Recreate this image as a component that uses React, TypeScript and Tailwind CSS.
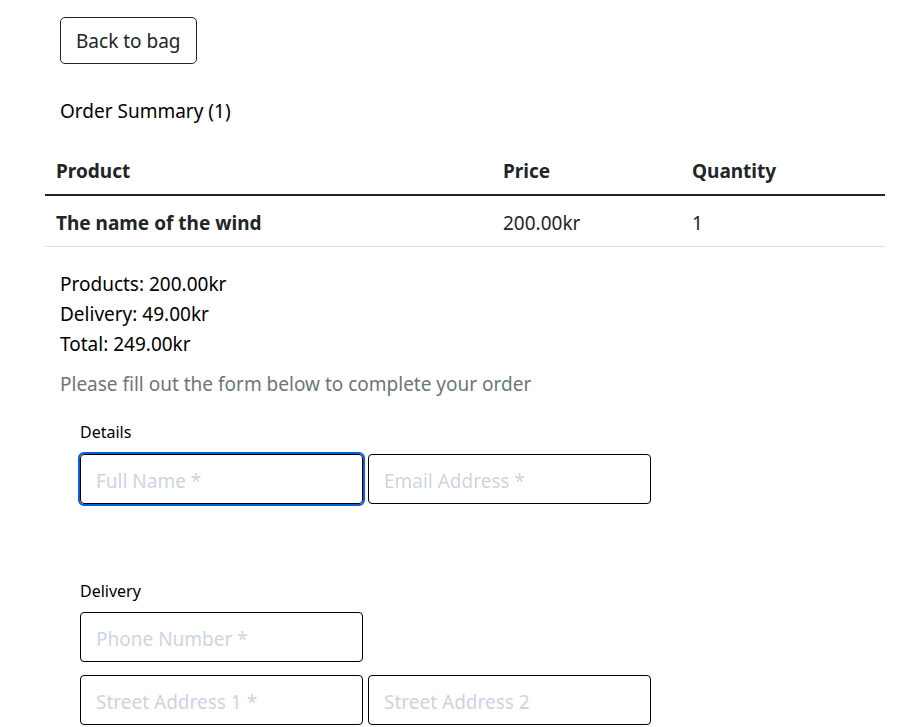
export default function App() {
  return (
    <div className="min-h-screen bg-white text-[#212529] font-['Noto_Sans',sans-serif] text-[19px]">
      <div className="pt-[17px] px-[60px]">
        <button className="h-[47px] px-[15px] pt-[2px] border border-[#212529] rounded-[5px] text-[19px] text-[#212529]">
          Back to bag
        </button>
        <h2 className="mt-[32px] text-[19px] leading-[30px] text-black">Order Summary (1)</h2>
      </div>

      <table className="ml-[45px] mt-[22px] w-[840px] text-left leading-[24px]">
        <thead>
          <tr className="border-b-2 border-[#212529]">
            <th className="pl-[11px] pt-[11px] pb-[11px] font-bold w-[447px]">Product</th>
            <th className="pl-[11px] pt-[11px] pb-[11px] font-bold w-[189px]">Price</th>
            <th className="pl-[11px] pt-[11px] pb-[11px] font-bold">Quantity</th>
          </tr>
        </thead>
        <tbody>
          <tr className="border-b border-[#dee2e6]">
            <td className="pl-[11px] pt-[15px] pb-[11px] font-bold">The name of the wind</td>
            <td className="pl-[11px] pt-[15px] pb-[11px]">200.00kr</td>
            <td className="pl-[11px] pt-[15px] pb-[11px]">1</td>
          </tr>
        </tbody>
      </table>

      <div className="px-[60px] pt-[22px] text-black leading-[30px]">
        <p>Products: 200.00kr</p>
        <p>Delivery: 49.00kr</p>
        <p>Total: 249.00kr</p>
        <p className="mt-[10px] text-[#6c757d]">Please fill out the form below to complete your order</p>
      </div>

      <form className="px-[80px] pt-[21px]">
        <div className="text-[16px] leading-[24px] text-black">Details</div>
        <div className="mt-[10px] flex gap-[5px]">
          <input
            autoFocus
            placeholder="Full Name *"
            className="w-[283px] h-[50px] px-[15px] pt-[3px] border border-black rounded-[4px] outline-2 outline-[#0060df] text-[19px] placeholder:text-[#cbd5e1]"
          />
          <input
            placeholder="Email Address *"
            className="w-[283px] h-[50px] px-[15px] pt-[3px] border border-black rounded-[4px] text-[19px] placeholder:text-[#cbd5e1]"
          />
        </div>

        <div className="mt-[75px] text-[16px] leading-[24px] text-black">Delivery</div>
        <div className="mt-[9px] flex gap-[5px]">
          <input
            placeholder="Phone Number *"
            className="w-[283px] h-[50px] px-[15px] pt-[3px] border border-black rounded-[4px] text-[19px] placeholder:text-[#cbd5e1]"
          />
        </div>
        <div className="mt-[13px] flex gap-[5px]">
          <input
            placeholder="Street Address 1 *"
            className="w-[283px] h-[50px] px-[15px] pt-[3px] border border-black rounded-[4px] text-[19px] placeholder:text-[#cbd5e1]"
          />
          <input
            placeholder="Street Address 2"
            className="w-[283px] h-[50px] px-[15px] pt-[3px] border border-black rounded-[4px] text-[19px] placeholder:text-[#cbd5e1]"
          />
        </div>
      </form>
    </div>
  );
}
